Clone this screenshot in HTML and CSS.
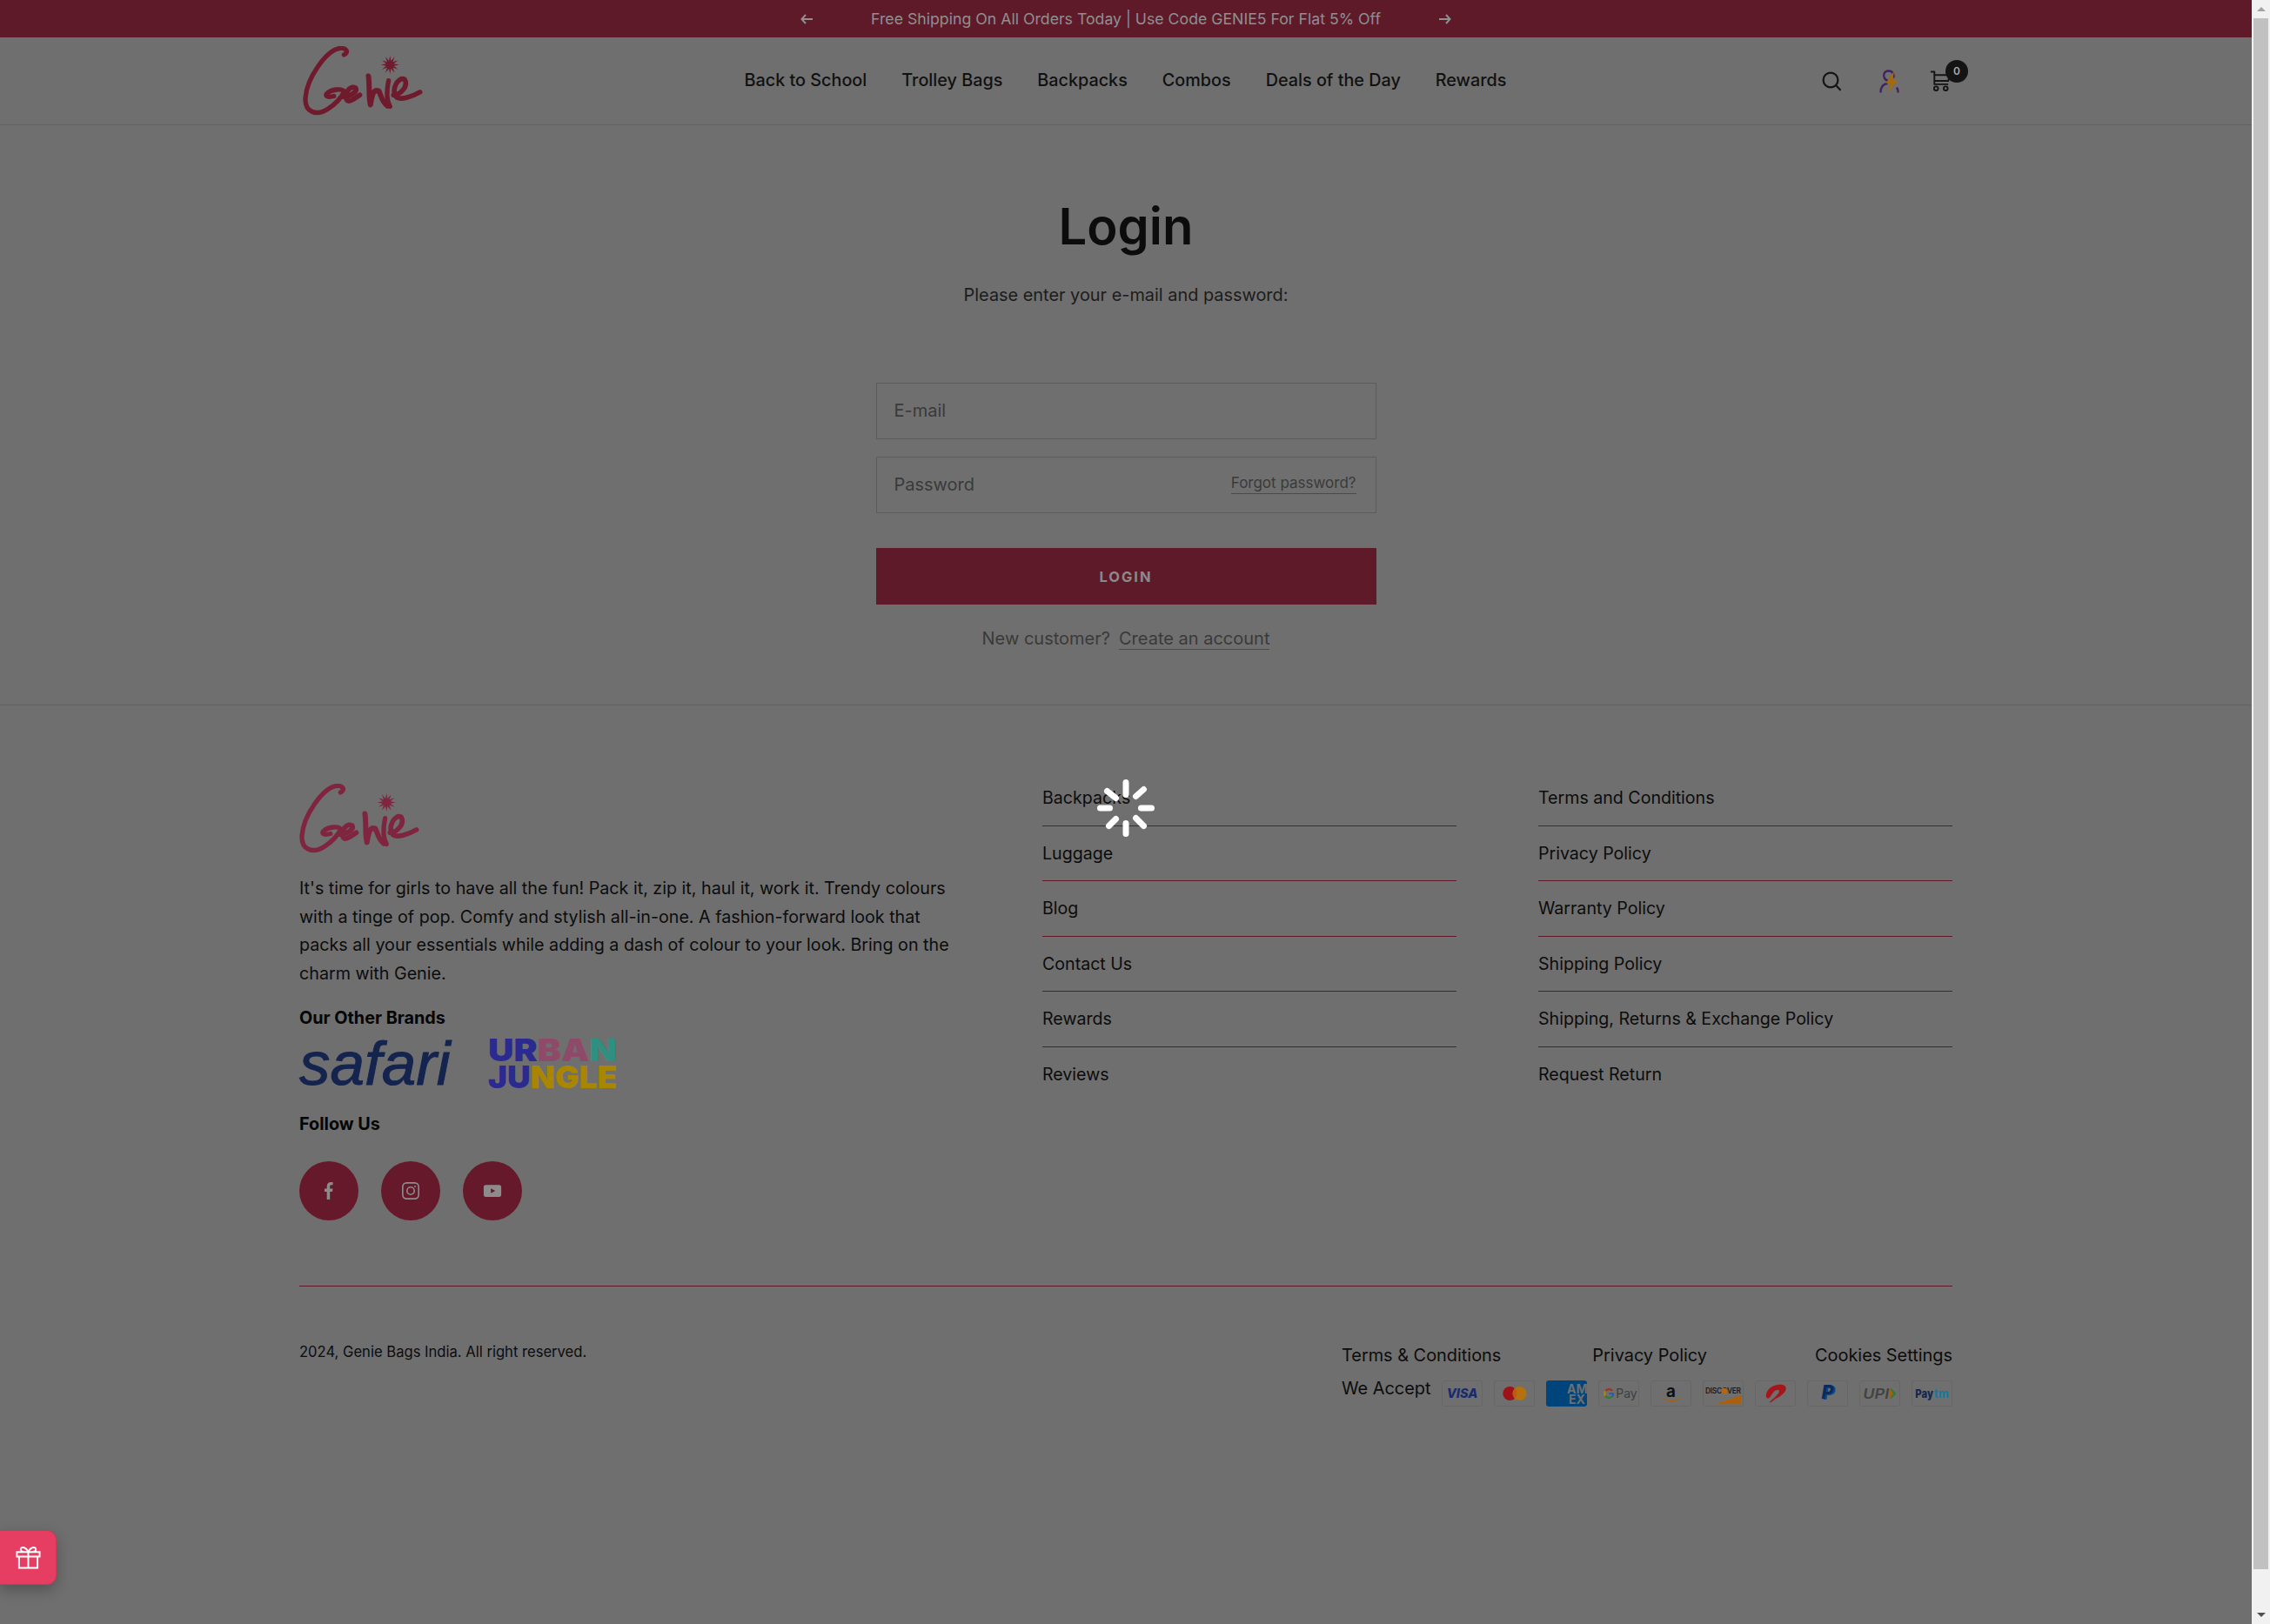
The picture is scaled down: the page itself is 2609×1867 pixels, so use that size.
FILE: index.html

```html
<!DOCTYPE html>
<html>
<head>
    <title>Login - Genie</title>
    <link rel="stylesheet" href="styles.css">
</head>
<body>
    <svg class="defs" width="0" height="0">
        <symbol id="genie" viewBox="25 20 415 245">
            <g fill="none" stroke="currentColor" stroke-linecap="round" stroke-linejoin="round">
                <path stroke-width="16" d="M167 50C185 42 176 24 150 28C105 37 38 130 33 200C30 250 70 264 110 239C135 223 155 205 168 178C160 166 125 170 108 184C98 195 112 199 132 194"/>
                <path stroke-width="17" d="M166 196C186 196 216 178 208 166C195 155 171 175 174 200C177 222 198 206 222 190"/>
                <path stroke-width="18" d="M252 124C257 160 252 198 259 224C265 192 268 168 288 176C296 190 298 214 318 228"/>
                <path stroke-width="16" d="M322 140C316 170 314 208 327 230"/>
                <path stroke-width="17" d="M339 190C362 190 392 160 378 136C355 124 332 170 347 194C360 212 405 195 431 180"/>
            </g>
            <polygon fill="currentColor" points="359,85 340.5,88.6 354.7,101 336.9,94.9 343,112.7 330.6,98.5 327,117 323.4,98.5 311,112.7 317.1,94.9 299.3,101 313.5,88.6 295,85 313.5,81.4 299.3,69 317.1,75.1 311,57.3 323.4,71.5 327,53 330.6,71.5 343,57.3 336.9,75.1 354.7,69 340.5,81.4"/>
        </symbol>
    </svg>

    <div class="page">
        <div class="announcement">
            <svg class="arrow" viewBox="0 0 14 12"><path d="M6 1L1.5 6L6 11M2 6H14"/></svg>
            <span class="announcement-text">Free Shipping On All Orders Today | Use Code GENIE5 For Flat 5% Off</span>
            <svg class="arrow" viewBox="0 0 14 12"><path d="M8 1L12.5 6L8 11M12 6H0"/></svg>
        </div>

        <header class="header">
            <svg class="logo header-logo"><use href="#genie"/></svg>
            <nav class="nav">
                <a>Back to School</a>
                <a>Trolley Bags</a>
                <a>Backpacks</a>
                <a>Combos</a>
                <a>Deals of the Day</a>
                <a>Rewards</a>
            </nav>
            <div class="header-icons">
                <svg class="icon-search" viewBox="0 0 23 23"><circle cx="10" cy="10" r="8.4"/><path d="M16.2 16.2L21.5 21.8"/></svg>
                <svg class="icon-user" viewBox="0 0 24 27">
                    <path class="user-line" d="M16 9.5C17.5 6 15.5 1.5 10.5 1.5C5.5 1.5 3.8 6.5 6 10C7.5 12.5 10 13 11.5 13.2M1.5 26.5C1.5 20 4 16.5 9.5 16M21.5 26.5C21.5 24 21 22 20 20.5"/>
                    <polygon class="user-bolt" points="17,1.5 7.5,15.5 12.5,15.5 10,26.5 21,11.5 15.5,11.5"/>
                </svg>
                <div class="cart">
                    <svg class="icon-cart" viewBox="0 0 26 26"><path d="M1 2H5.5V17H22"/><path d="M5.5 6H24L22 13H5.5"/><circle cx="7.5" cy="22" r="2.4"/><circle cx="19" cy="22" r="2.4"/></svg>
                    <span class="cart-count">0</span>
                </div>
            </div>
        </header>

        <main class="login">
            <h1>Login</h1>
            <p class="login-hint">Please enter your e-mail and password:</p>
            <form class="login-form">
                <input type="text" placeholder="E-mail">
                <div class="password-field">
                    <input type="password" placeholder="Password">
                    <a class="forgot">Forgot password?</a>
                </div>
                <button type="button">LOGIN</button>
            </form>
            <p class="new-customer">New customer?<a>Create an account</a></p>
        </main>

        <footer class="footer">
            <div class="footer-top">
                <div class="footer-about">
                    <svg class="logo footer-logo"><use href="#genie"/></svg>
                    <p class="about-text">It's time for girls to have all the fun! Pack it, zip it, haul it, work it. Trendy colours<br>with a tinge of pop. Comfy and stylish all-in-one. A fashion-forward look that<br>packs all your essentials while adding a dash of colour to your look. Bring on the<br>charm with Genie.</p>
                    <h4>Our Other Brands</h4>
                    <div class="brands">
                        <span class="safari">safari</span>
                        <svg class="urban" viewBox="0 0 148 58">
                            <text x="0" y="26" textLength="148" lengthAdjust="spacingAndGlyphs"><tspan fill="#2a2a90">UR</tspan><tspan fill="#8e4a68">BA</tspan><tspan fill="#2f8f80">N</tspan></text>
                            <text x="0" y="57" textLength="148" lengthAdjust="spacingAndGlyphs"><tspan fill="#2a2a90">JU</tspan><tspan fill="#a98600">NGLE</tspan></text>
                        </svg>
                    </div>
                    <h4 class="follow">Follow Us</h4>
                    <div class="social">
                        <a><svg viewBox="0 0 24 24"><path class="solid" d="M9.5 23V13H6.5V9.4H9.5V6.6C9.5 3 11.5 1.2 14.6 1.2C15.8 1.2 16.8 1.3 17 1.4V4.6H15.2C13.6 4.6 13.3 5.4 13.3 6.5V9.4H16.9L16.4 13H13.3V23Z"/></svg></a>
                        <a><svg viewBox="0 0 24 24"><rect class="line" x="2" y="2" width="20" height="20" rx="5"/><circle class="line" cx="12" cy="12" r="4.6"/><circle class="solid" cx="17.5" cy="6.5" r="1.1"/></svg></a>
                        <a><svg viewBox="0 0 24 24"><path class="solid" fill-rule="evenodd" d="M3.5 4.5H20.5C22 4.5 23 5.5 23 7V17C23 18.5 22 19.5 20.5 19.5H3.5C2 19.5 1 18.5 1 17V7C1 5.5 2 4.5 3.5 4.5ZM10 9V15L15.5 12Z"/></svg></a>
                    </div>
                </div>
                <ul class="footer-links">
                    <li>Backpacks</li>
                    <li>Luggage</li>
                    <li>Blog</li>
                    <li>Contact Us</li>
                    <li>Rewards</li>
                    <li>Reviews</li>
                </ul>
                <ul class="footer-links">
                    <li>Terms and Conditions</li>
                    <li>Privacy Policy</li>
                    <li>Warranty Policy</li>
                    <li>Shipping Policy</li>
                    <li>Shipping, Returns &amp; Exchange Policy</li>
                    <li>Request Return</li>
                </ul>
            </div>

            <div class="footer-bottom">
                <p class="copyright">2024, Genie Bags India. All right reserved.</p>
                <div class="legal">
                    <div class="legal-links">
                        <a>Terms &amp; Conditions</a>
                        <a>Privacy Policy</a>
                        <a class="cookies">Cookies Settings</a>
                    </div>
                    <div class="accept">
                        <span>We Accept</span>
                        <div class="cards">
                            <svg class="card" viewBox="0 0 47 30"><text x="23.5" y="20.5" class="c-visa">VISA</text></svg>
                            <svg class="card" viewBox="0 0 47 30"><circle cx="18" cy="15" r="8.6" fill="#9c1218"/><circle cx="30" cy="15" r="8.6" fill="#b3710f"/><path d="M24 8.8A8.6 8.6 0 0 1 24 21.2A8.6 8.6 0 0 1 24 8.8Z" fill="#bd5a10"/></svg>
                            <svg class="card card-amex" viewBox="0 0 47 30"><rect width="47" height="30" rx="2" fill="#00447c"/><text x="24" y="15" class="c-amex">AM</text><text x="26" y="27" class="c-amex">EX</text></svg>
                            <svg class="card" viewBox="0 0 47 30"><g fill="none" stroke-width="2.4"><path d="M15.5 11.500A5.600 5.600 0 0 0 7 12" stroke="#a0322a"/><path d="M7 12A5.600 5.600 0 0 0 7 18" stroke="#a88410"/><path d="M7 18A5.600 5.600 0 0 0 15.500 18.500" stroke="#2f7a3e"/><path d="M15.500 18.500A5.600 5.600 0 0 0 16.500 15H11.500" stroke="#2f5f9e"/></g><text x="20" y="20" class="c-gpay">Pay</text></svg>
                            <svg class="card" viewBox="0 0 47 30"><text x="23.5" y="19.5" class="c-amazon">a</text><path d="M13 20.500C20 25.500 28 25.500 34 21.500" fill="none" stroke="#a5610c" stroke-width="1.4"/></svg>
                            <svg class="card" viewBox="0 0 47 30"><path d="M13 28L46 17V28Z" fill="#a9610f"/><text x="1.5" y="15" textLength="44" class="c-discover">DISCOVER</text><circle cx="25" cy="12" r="3.8" fill="#b8660c"/></svg>
                            <svg class="card" viewBox="0 0 47 30"><path d="M12 18C12 10 20 4 30 4C37 4 38 9 35 13C32 17 27 20 23 22C21 24 19 26 16 26C19 22 26 18 28 13C29 11 27 10 24 11C20 13 18 20 15 21C13 21 12 20 12 18Z" fill="#a5161c"/></svg>
                            <svg class="card" viewBox="0 0 47 30"><text x="18" y="23" class="c-paypal" fill="#0a4a8c">P</text><text x="16" y="21" class="c-paypal" fill="#0b2a5e">P</text></svg>
                            <svg class="card" viewBox="0 0 47 30"><text x="3" y="21" textLength="32" lengthAdjust="spacingAndGlyphs" class="c-upi">UPI</text><path d="M37 8L44 15L37 22Z" fill="#2f7a3e"/><path d="M35.5 8L40 15L35.5 22Z" fill="#a5610c"/></svg>
                            <svg class="card" viewBox="0 0 47 30"><text x="3" y="20" textLength="22" lengthAdjust="spacingAndGlyphs" class="c-pay">Pay</text><text x="26" y="20" textLength="18" lengthAdjust="spacingAndGlyphs" class="c-tm">tm</text></svg>
                        </div>
                    </div>
                </div>
            </div>
        </footer>

        <div class="loader">
            <svg class="spinner" viewBox="0 0 66 66">
                <path d="M33 3.5V17.5M33 50.5V62.5M3.5 33H14.5M50.5 33H62.5M11.5 13.5L21.5 21.5M53.5 11.5L44.5 19.5M13.5 53.5L21.5 45.5M53.5 53.5L44.5 44.5"/>
            </svg>
        </div>

        <a class="gift">
            <svg viewBox="0 0 30 28"><path d="M4 13V26.5H26V13M1.5 7.5H28.5V13H1.5ZM15 7.5V26.5M15 7.5C12 1 5.5 0.5 6 5C6.2 6.5 8 7.5 15 7.5C22 7.5 23.8 6.5 24 5C24.5 0.5 18 1 15 7.5Z"/></svg>
        </a>
    </div>

    <div class="scrollbar">
        <span class="scroll-up"></span>
        <div class="scroll-thumb"></div>
        <span class="scroll-down"></span>
    </div>
</body>
</html>
```

FILE: styles.css

```css
html, body {
    height: 100%;
    overflow: hidden;
}
body {
    margin: 0;
    display: flex;
    background: #6f6f6f;
    color: #111;
    font-family: Inter, "Noto Sans", sans-serif;
}
.defs {
    position: absolute;
}
p, h1, h4, ul {
    margin: 0;
    padding: 0;
}
.page {
    flex: 1;
    position: relative;
    min-width: 0;
}

/* top bar */
.announcement {
    height: 43px;
    background: #5f1a2a;
    color: #8f8f8f;
    display: flex;
    align-items: center;
    justify-content: center;
    gap: 67px;
    font-size: 17.7px;
}
.arrow {
    width: 14px;
    height: 12px;
    fill: none;
    stroke: #8f8f8f;
    stroke-width: 2;
}

/* header */
.header {
    height: 100px;
    border-bottom: 1px solid #626262;
    padding: 0 345px 0 344px;
    display: grid;
    grid-template-columns: 1fr auto 1fr;
    align-items: center;
}
.logo {
    display: block;
    color: #701a2e;
}
.header-logo {
    width: 138px;
    height: 81px;
    margin-left: 4px;
}
.nav {
    display: flex;
    gap: 40px;
    padding-bottom: 2px;
    font-size: 19.8px;
    font-weight: 500;
}
.header-icons {
    display: flex;
    justify-content: flex-end;
    align-items: center;
}
.icon-search {
    width: 23px;
    height: 23px;
    fill: none;
    stroke: #141414;
    stroke-width: 2.2;
    margin-right: 43px;
}
.icon-user {
    width: 24px;
    height: 27px;
    margin-right: 34px;
}
.user-line {
    fill: none;
    stroke: #41245f;
    stroke-width: 2.4;
}
.user-bolt {
    fill: #a56a0a;
}
.cart {
    position: relative;
    width: 25px;
    height: 26px;
}
.icon-cart {
    width: 25px;
    height: 26px;
    fill: none;
    stroke: #141414;
    stroke-width: 2;
}
.cart-count {
    position: absolute;
    left: 18px;
    top: -11px;
    width: 26px;
    height: 26px;
    border-radius: 50%;
    background: #141414;
    color: #a9a9a9;
    font-size: 12px;
    font-weight: 600;
    line-height: 26px;
    text-align: center;
}

/* login form */
.login {
    width: 575px;
    margin: 0 auto;
    padding: 81px 0 61px;
    text-align: center;
}
h1 {
    font-size: 58px;
    font-weight: 600;
    line-height: 70px;
    color: #0c0c0c;
}
.login-hint {
    margin-top: 29px;
    font-size: 19.9px;
    line-height: 30px;
    color: #1c1c1c;
}
.login-form {
    margin-top: 86px;
}
.login-form input {
    display: block;
    box-sizing: border-box;
    width: 100%;
    height: 65px;
    padding: 0 20px 2px;
    border: 1px solid #5c5c5c;
    background: none;
    font: inherit;
    font-size: 20px;
    outline: none;
}
.login-form input::placeholder {
    color: #3a3a3a;
    opacity: 1;
}
.password-field {
    position: relative;
    margin-top: 20px;
}
.forgot {
    position: absolute;
    right: 23px;
    top: 19px;
    font-size: 17px;
    line-height: 23px;
    color: #3a3a3a;
    border-bottom: 1px solid #4a4a4a;
}
.login-form button {
    display: block;
    width: 100%;
    height: 65px;
    margin-top: 40px;
    border: none;
    background: #5f1a2a;
    color: #8a8a8a;
    font: inherit;
    font-size: 16.5px;
    font-weight: 700;
    letter-spacing: 2px;
}
.new-customer {
    margin-top: 24px;
    font-size: 20px;
    line-height: 30px;
    color: #3a3a3a;
}
.new-customer a {
    margin-left: 10px;
    border-bottom: 1px solid #4a4a4a;
}

/* footer */
.footer {
    border-top: 1px solid #626262;
    padding: 75px 344px 0;
}
.footer-top {
    display: grid;
    grid-template-columns: 760px 476px 476px;
    column-gap: 94px;
    height: 517px;
    border-bottom: 1px solid #5f1a2a;
    padding-bottom: 75px;
}
.footer-about {
    padding-top: 15px;
    color: #0c0c0c;
}
.footer-logo {
    width: 138px;
    height: 81px;
    color: #80253f;
}
.about-text {
    margin-top: 23px;
    font-size: 19.7px;
    line-height: 32.5px;
    white-space: nowrap;
}
h4 {
    margin-top: 20px;
    font-size: 19.8px;
    font-weight: 700;
    line-height: 30px;
    color: #050505;
}
.brands {
    display: flex;
    align-items: center;
    gap: 42px;
    margin-top: 9px;
    height: 58px;
}
.safari {
    width: 175px;
    font-family: "Liberation Sans", Arial, sans-serif;
    font-style: italic;
    font-size: 71px;
    line-height: 58px;
    white-space: nowrap;
    color: #14244f;
    -webkit-text-stroke: 1px #14244f;
}
.urban {
    width: 148px;
    height: 58px;
    overflow: visible;
    font-weight: 900;
    font-size: 36px;
}
.follow {
    margin-top: 25px;
}
.social {
    display: flex;
    gap: 26px;
    margin-top: 28px;
}
.social a {
    width: 68px;
    height: 68px;
    border-radius: 50%;
    background: #66192b;
    display: flex;
    align-items: center;
    justify-content: center;
}
.social svg {
    width: 22px;
    height: 22px;
}
.solid {
    fill: #8c8c8c;
}
.line {
    fill: none;
    stroke: #8c8c8c;
    stroke-width: 1.8;
}
.footer-links {
    list-style: none;
    font-size: 19.6px;
    color: #0c0c0c;
}
.footer-links li {
    height: 63.5px;
    box-sizing: border-box;
    display: flex;
    align-items: center;
    border-bottom: 1px solid #5f1a2a;
}
.footer-links li:last-child {
    border-bottom: none;
}

/* footer bottom */
.footer-bottom {
    display: flex;
    justify-content: space-between;
    padding-top: 63px;
}
.copyright {
    font-size: 16.6px;
    line-height: 24px;
    color: #0c0c0c;
}
.legal {
    width: 702px;
    font-size: 19.9px;
    color: #0c0c0c;
}
.legal-links {
    display: flex;
    gap: 105px;
    margin-top: 1px;
    line-height: 30px;
}
.cookies {
    margin-left: auto;
}
.accept {
    display: flex;
    justify-content: space-between;
    margin-top: 8px;
    line-height: 30px;
}
.cards {
    display: flex;
    gap: 13px;
    margin-top: 6px;
}
.card {
    width: 47px;
    height: 30px;
    box-sizing: border-box;
    border: 1px solid #676767;
    border-radius: 3px;
}
.card-amex {
    border: none;
}
.card text {
    font-family: Inter, sans-serif;
}
.c-visa {
    font-size: 15.5px;
    font-weight: 800;
    font-style: italic;
    text-anchor: middle;
    fill: #1a2a6e;
}
.c-amex {
    font-size: 14px;
    font-weight: 700;
    fill: #6f6f6f;
}
.c-gpay {
    font-size: 15px;
    fill: #404040;
}
.c-amazon {
    font-size: 20px;
    font-weight: 700;
    text-anchor: middle;
    fill: #101010;
}
.c-discover {
    font-size: 9px;
    font-weight: 600;
    fill: #1c1c1c;
}
.c-paypal {
    font-size: 23px;
    font-weight: 800;
    font-style: italic;
}
.c-upi {
    font-size: 17px;
    font-weight: 600;
    font-style: italic;
    fill: #424242;
}
.c-pay {
    font-size: 14px;
    font-weight: 800;
    fill: #14244f;
}
.c-tm {
    font-size: 15px;
    font-weight: 700;
    fill: #127a9e;
}

/* loading overlay */
.loader {
    position: absolute;
    inset: 0;
    display: flex;
    align-items: center;
    justify-content: center;
    padding-bottom: 9px;
    box-sizing: border-box;
}
.spinner {
    width: 66px;
    height: 66px;
    fill: none;
    stroke: #fff;
    stroke-width: 7;
    stroke-linecap: round;
}

/* gift tab */
.gift {
    position: absolute;
    left: 0;
    bottom: 45px;
    width: 65px;
    height: 63px;
    box-sizing: border-box;
    background: #e63e62;
    border: 1px solid #c93a5a;
    border-left: none;
    border-radius: 0 11px 11px 0;
    box-shadow: 0 6px 16px rgba(0, 0, 0, 0.25);
    display: flex;
    align-items: center;
    justify-content: center;
}
.gift svg {
    width: 29px;
    height: 29px;
    fill: none;
    stroke: #fff;
    stroke-width: 2;
}

/* browser scrollbar */
.scrollbar {
    width: 21px;
    flex: none;
    background: #f1f1f1;
    display: flex;
    flex-direction: column;
    align-items: center;
}
.scroll-up, .scroll-down {
    height: 21px;
    flex: none;
    display: flex;
    align-items: center;
}
.scroll-up::before {
    content: "";
    border: 5px solid transparent;
    border-top: none;
    border-bottom: 5px solid #a3a3a3;
}
.scroll-down {
    margin-top: auto;
}
.scroll-down::before {
    content: "";
    border: 5px solid transparent;
    border-bottom: none;
    border-top: 5px solid #505050;
}
.scroll-thumb {
    width: 17px;
    height: 1783px;
    background: #c1c1c1;
}
```
